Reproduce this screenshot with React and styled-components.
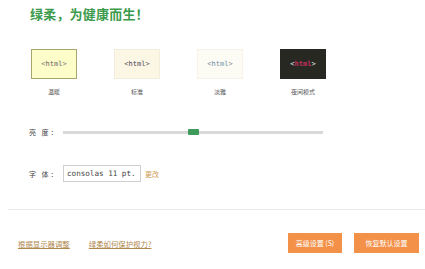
import React from "react";
import styled, { createGlobalStyle } from "styled-components";

const Global = createGlobalStyle`
  html, body { margin: 0; padding: 0; background: #fff; }
  body { font-family: "Noto Sans CJK SC", "Noto Sans", sans-serif; }
`;

const Page = styled.div`
  width: 425px;
  height: 269px;
  overflow: hidden;
  display: flex;
  flex-direction: column;
`;

const Title = styled.h1`
  margin: 4px 0 0 30px;
  font-size: 13px;
  line-height: 20px;
  font-weight: 700;
  color: #3b9a4c;
  letter-spacing: 0.2px;
`;

const Themes = styled.div`
  display: flex;
  gap: 37px;
  margin: 25px 0 0 31px;
`;

const Theme = styled.div`
  width: 46px;
  display: flex;
  flex-direction: column;
  align-items: center;
`;

const Swatch = styled.div`
  box-sizing: border-box;
  width: 46px;
  height: 30px;
  background: ${(p) => p.$bg};
  border: 1px solid ${(p) => p.$border};
  display: flex;
  align-items: center;
  justify-content: center;
  font-family: "DejaVu Sans Mono", "Liberation Mono", monospace;
  font-size: 7px;
  color: ${(p) => p.$bracket};
`;

const Tag = styled.span`
  color: ${(p) => p.$color};
  font-weight: ${(p) => (p.$bold ? 700 : 400)};
`;

const ThemeLabel = styled.div`
  margin-top: 9px;
  font-size: 6px;
  line-height: 8px;
  color: #555;
`;

const Row = styled.div`
  display: flex;
  align-items: center;
  margin-left: 29px;
  margin-top: ${(p) => p.$mt}px;
`;

const Label = styled.span`
  width: 34px;
  font-size: 7px;
  color: #444;
  letter-spacing: 2px;
`;

const Track = styled.div`
  position: relative;
  width: 260px;
  height: 3px;
  background: #d9d9d9;
`;

const Thumb = styled.div`
  position: absolute;
  top: -2px;
  left: 125px;
  width: 11px;
  height: 6px;
  background: #3f9b5c;
  border-radius: 1px;
`;

const FontBox = styled.div`
  box-sizing: border-box;
  width: 78px;
  height: 17px;
  border: 1px solid #cfcfcf;
  display: flex;
  align-items: center;
  padding-left: 3px;
  font-family: "DejaVu Sans Mono", "Liberation Mono", monospace;
  font-size: 7.6px;
  color: #444;
`;

const Change = styled.a`
  margin-left: 4px;
  font-size: 7px;
  color: #cf9a55;
  text-decoration: none;
`;

const Divider = styled.hr`
  margin: 27px 0 0 8px;
  border: none;
  border-top: 1px solid #e8e8e8;
  height: 0;
`;

const Footer = styled.div`
  display: flex;
  align-items: center;
  margin: 23px 0 0 18px;
`;

const Link = styled.a`
  font-size: 7.4px;
  color: #b0884e;
  text-decoration: underline;
  margin-right: 19px;
`;

const Spacer = styled.div`
  flex: 1;
`;

const Button = styled.button`
  height: 20px;
  width: ${(p) => p.$w}px;
  margin-right: ${(p) => p.$mr}px;
  border: none;
  background: #f39149;
  color: #fff;
  font-family: "Noto Sans CJK SC", sans-serif;
  font-size: 7px;
  padding: 0;
`;

const themes = [
  { name: "温暖", bg: "#fdfdc9", border: "#a5a56e", br: "#777", tag: "#666" },
  { name: "标准", bg: "#fcf7e4", border: "#f1ecdc", br: "#555", tag: "#445" },
  { name: "淡雅", bg: "#fdfcf4", border: "#f5f3ea", br: "#7a8a90", tag: "#6a90a8" },
  { name: "夜间模式", bg: "#272822", border: "#272822", br: "#f0f0f0", tag: "#c2305c", bold: true },
];

export default function App() {
  return (
    <Page>
      <Global />
      <Title>绿柔，为健康而生！</Title>
      <Themes>
        {themes.map((t) => (
          <Theme key={t.name}>
            <Swatch $bg={t.bg} $border={t.border} $bracket={t.br}>
              &lt;<Tag $color={t.tag} $bold={t.bold}>html</Tag>&gt;
            </Swatch>
            <ThemeLabel>{t.name}</ThemeLabel>
          </Theme>
        ))}
      </Themes>
      <Row $mt={31}>
        <Label>亮 度：</Label>
        <Track>
          <Thumb />
        </Track>
      </Row>
      <Row $mt={28}>
        <Label>字 体：</Label>
        <FontBox>consolas 11 pt.</FontBox>
        <Change href="#">更改</Change>
      </Row>
      <Divider />
      <Footer>
        <Link href="#">根据显示器调整</Link>
        <Link href="#">绿柔如何保护视力?</Link>
        <Spacer />
        <Button $w={54} $mr={12}>高级设置 (S)</Button>
        <Button $w={65} $mr={6}>恢复默认设置</Button>
      </Footer>
    </Page>
  );
}
